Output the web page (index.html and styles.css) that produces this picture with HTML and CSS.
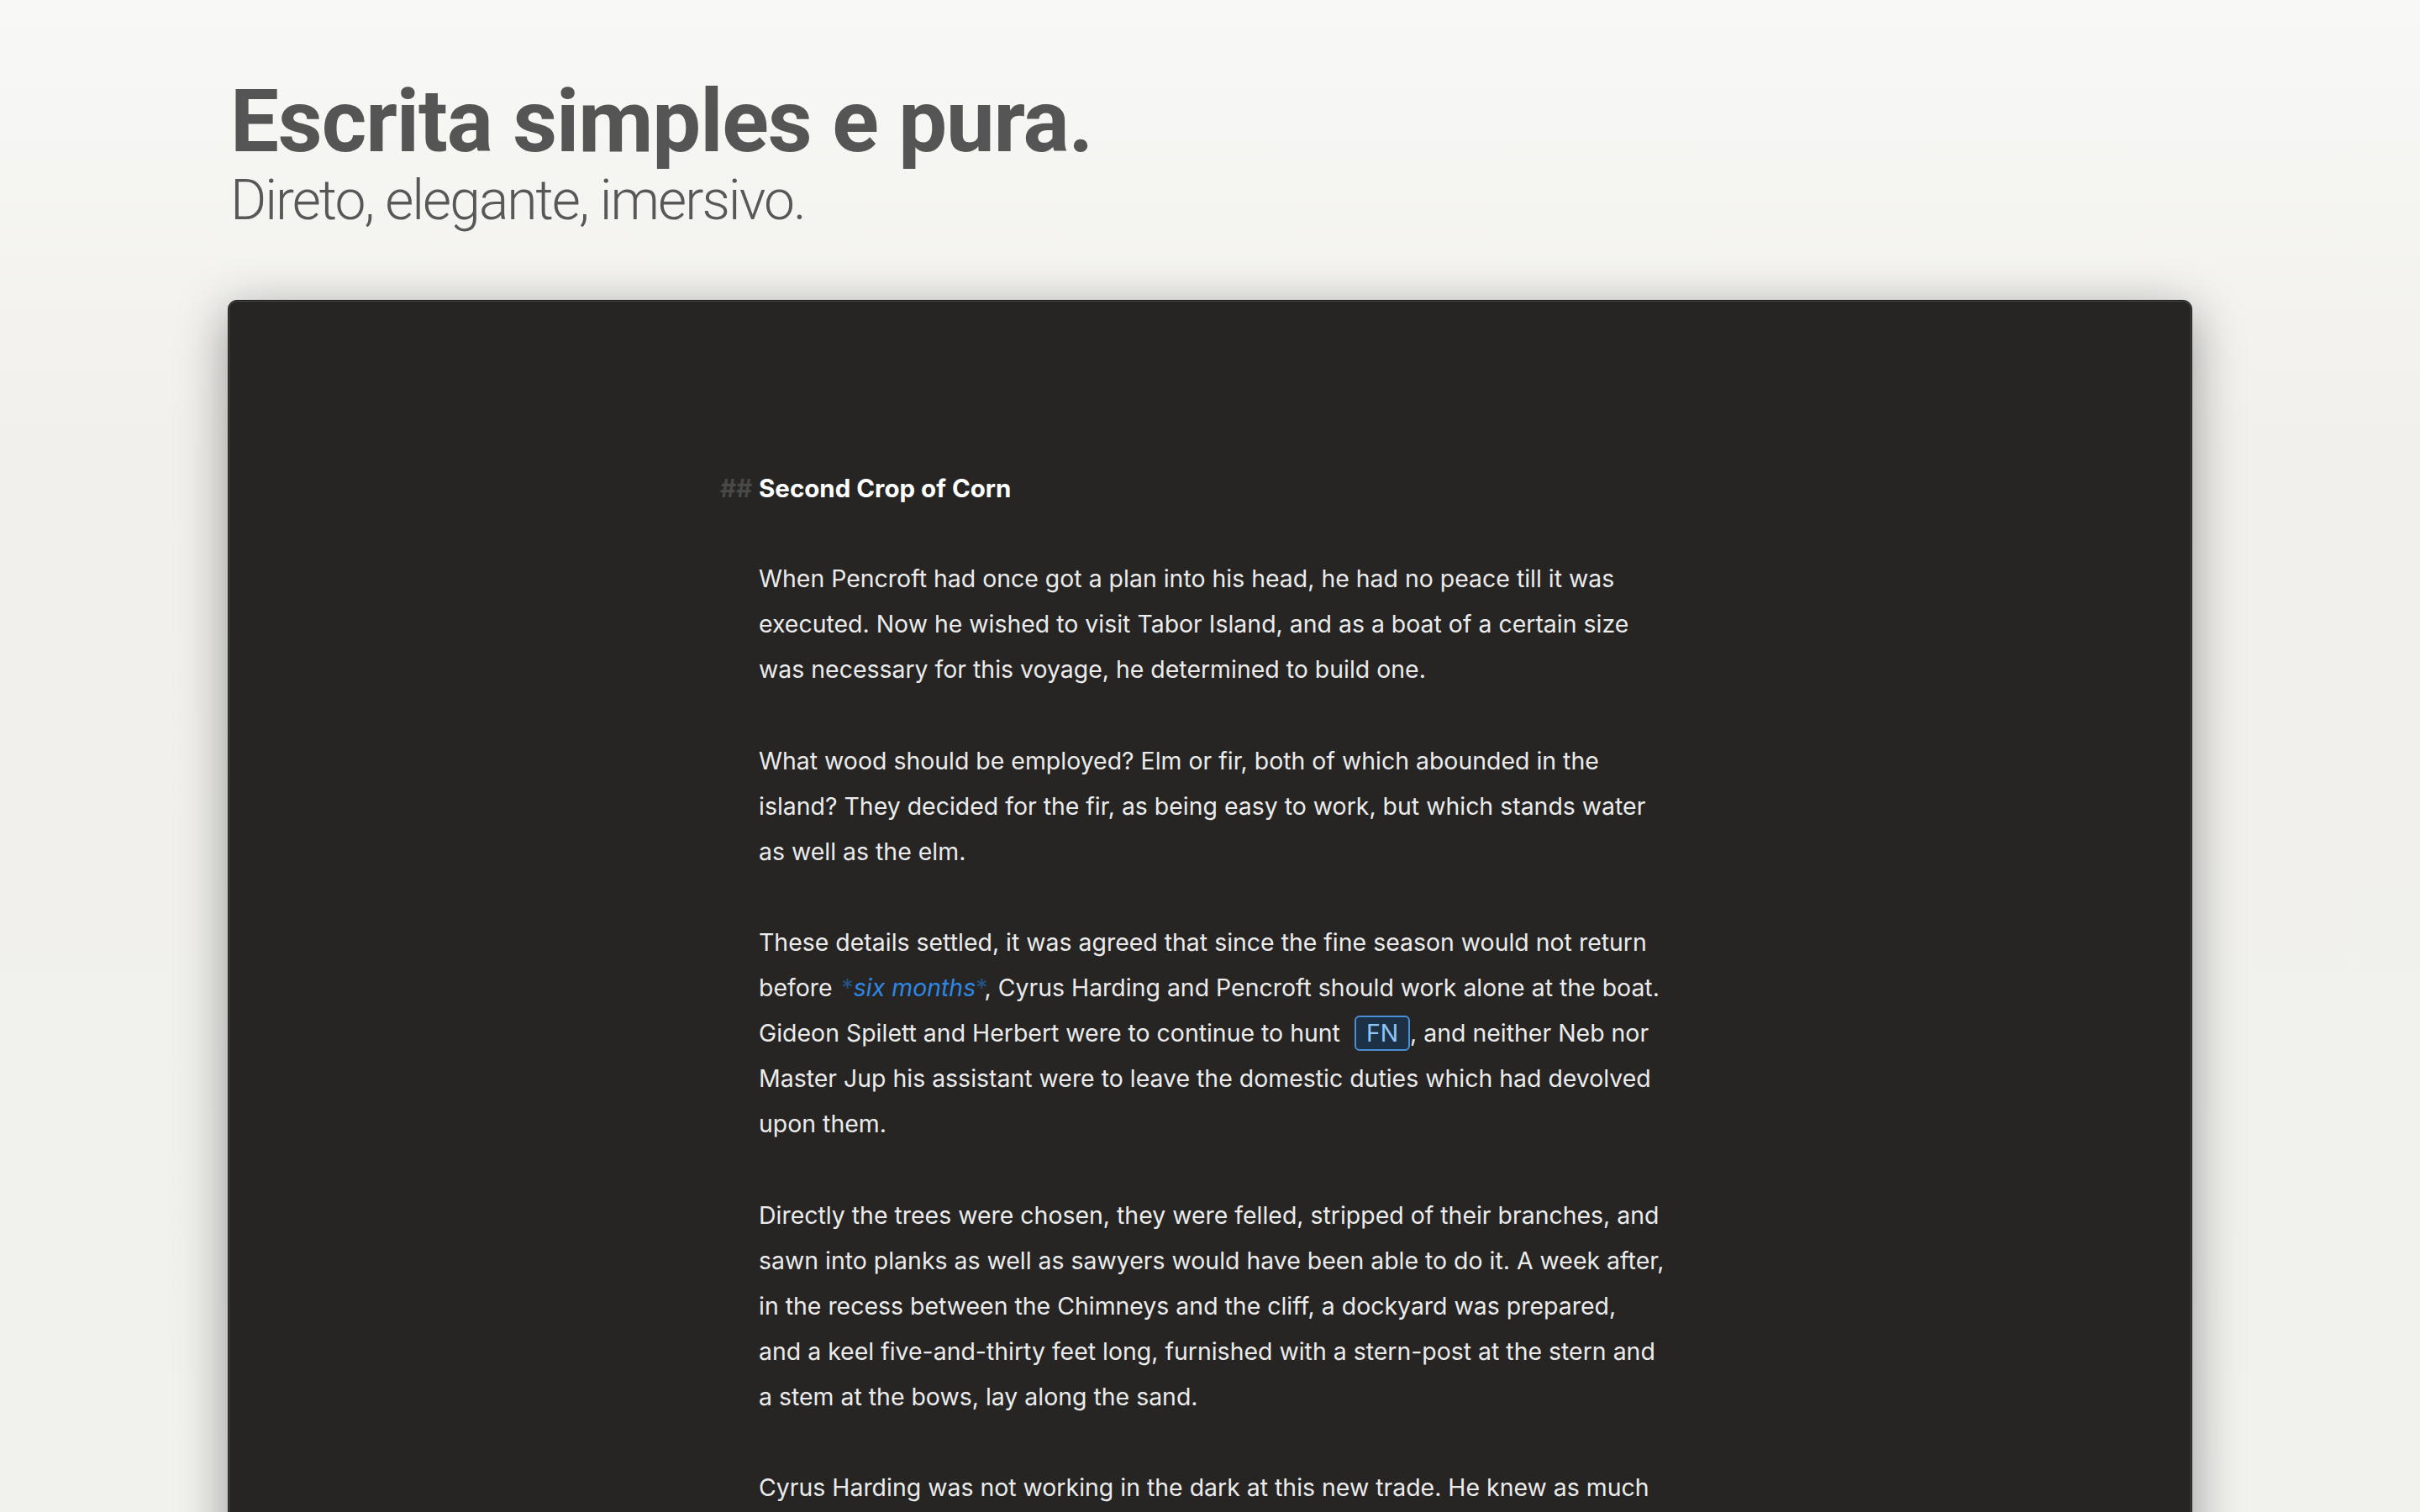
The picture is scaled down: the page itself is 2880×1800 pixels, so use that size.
FILE: index.html
```html
<!DOCTYPE html>
<html lang="pt">
<head>
<meta charset="utf-8">
<title>Escrita simples e pura.</title>
<link rel="stylesheet" href="styles.css">
</head>
<body>
<header class="hero">
  <h1 class="hero-title">Escrita simples e pura.</h1>
  <p class="hero-sub">Direto, elegante, imersivo.</p>
</header>
<main class="window">
  <article class="sheet">
    <h2 class="sheet-heading"><span class="md-mark">##</span><span>Second Crop of Corn</span></h2>
    <p class="para">When Pencroft had once got a plan into his head, he had no peace till it was<br>executed. Now he wished to visit Tabor Island, and as a boat of a certain size<br>was necessary for this voyage, he determined to build one.</p>
    <p class="para">What wood should be employed? Elm or fir, both of which abounded in the<br>island? They decided for the fir, as being easy to work, but which stands water<br>as well as the elm.</p>
    <p class="para">These details settled, it was agreed that since the fine season would not return<br>before <em class="emph"><span class="emph-mark">*</span>six months<span class="emph-mark">*</span></em>, Cyrus Harding and Pencroft should work alone at the boat.<br>Gideon Spilett and Herbert were to continue to hunt <span class="fn">FN</span>, and neither Neb nor<br>Master Jup his assistant were to leave the domestic duties which had devolved<br>upon them.</p>
    <p class="para">Directly the trees were chosen, they were felled, stripped of their branches, and<br>sawn into planks as well as sawyers would have been able to do it. A week after,<br>in the recess between the Chimneys and the cliff, a dockyard was prepared,<br>and a keel five-and-thirty feet long, furnished with a stern-post at the stern and<br>a stem at the bows, lay along the sand.</p>
    <p class="para">Cyrus Harding was not working in the dark at this new trade. He knew as much</p>
  </article>
</main>
</body>
</html>
```
FILE: styles.css
```css
html, body {
  margin: 0;
  padding: 0;
}

body {
  width: 2880px;
  height: 1800px;
  overflow: hidden;
  background: linear-gradient(180deg, #f8f8f6 0%, #f1f0ec 30%, #f1f1ee 100%);
  font-family: Roboto, "Liberation Sans", sans-serif;
}

.hero {
  padding: 88px 0 0 274px;
  color: #555555;
}

.hero-title {
  margin: 0;
  font-family: Roboto, "Liberation Sans", sans-serif;
  font-weight: 700;
  font-size: 103px;
  line-height: 114px;
  letter-spacing: -1.1px;
}

.hero-sub {
  margin: 0;
  font-family: Roboto, "Liberation Sans", sans-serif;
  font-weight: 300;
  font-size: 66px;
  line-height: 74px;
  letter-spacing: -2px;
  color: #585858;
}

.window {
  margin: 81px 0 0 271px;
  width: 2338px;
  height: 1500px;
  box-sizing: border-box;
  background: #262524;
  border: 1px solid #1a1a1a;
  border-radius: 11px 11px 0 0;
  box-shadow: inset 0 0 0 1px #4a4a48, 0 14px 60px rgba(0, 0, 0, 0.38);
}

.sheet {
  padding: 196px 0 0 631px;
  font-family: Inter, "Noto Sans", sans-serif;
  font-size: 28.45px;
  line-height: 54.1px;
  color: #ebebeb;
  white-space: nowrap;
}

.sheet-heading {
  display: flex;
  gap: 9px;
  margin: 0 0 54.1px -46px;
  font-size: 29.5px;
  line-height: 54.1px;
  font-weight: 700;
  color: #ffffff;
}

.md-mark {
  color: #484847;
  width: 37px;
}

.para {
  margin: 0 0 54.1px 0;
}

.emph {
  color: #2f87e2;
  font-style: italic;
  padding-left: 3px;
}

.emph-mark {
  color: #235585;
  font-style: normal;
}

.fn {
  display: inline-block;
  box-sizing: border-box;
  height: 42px;
  line-height: 38px;
  padding: 0 12px;
  border: 2px solid #4a8fd6;
  border-radius: 6px;
  background: #1c3145;
  color: #8ec4f6;
  margin-left: 9px;
  vertical-align: baseline;
}
```
